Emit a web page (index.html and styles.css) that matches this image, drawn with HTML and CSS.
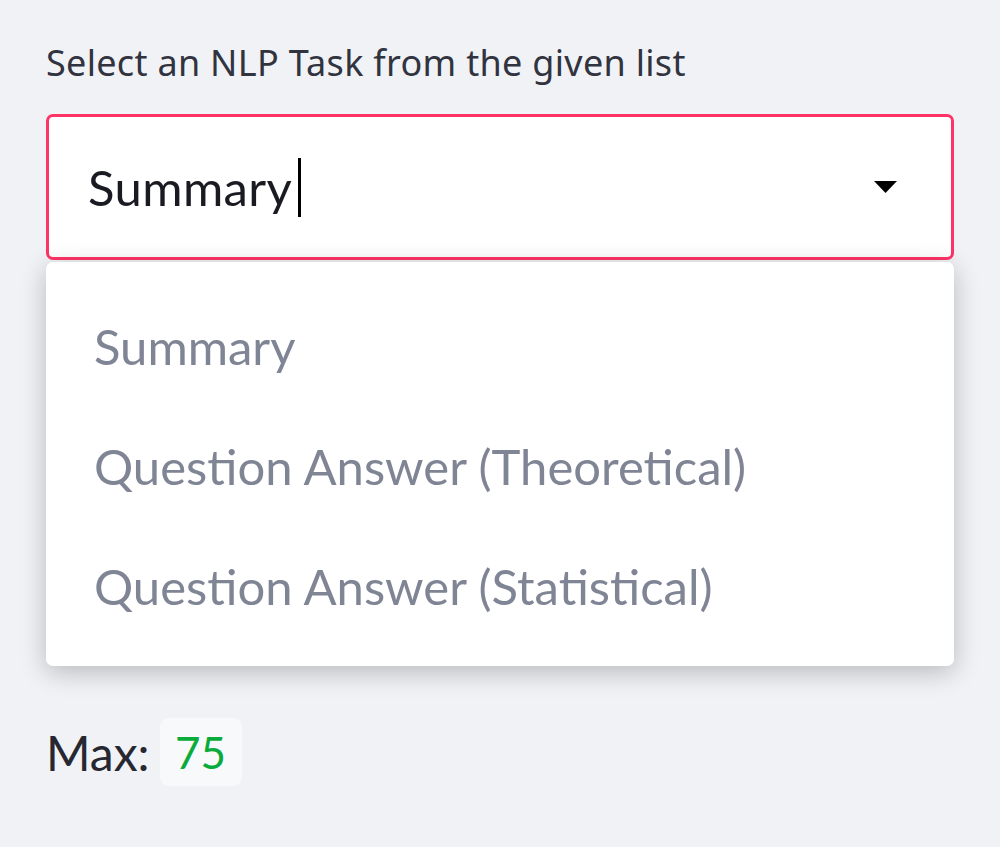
FILE: index.html
```html
<!DOCTYPE html>
<html lang="en">
<head>
<meta charset="utf-8">
<title>NLP Task</title>
<link rel="stylesheet" href="styles.css">
</head>
<body>
<div class="page">
  <div class="label">Select an NLP Task from the given list</div>
  <div class="select">
    <span class="value">Summary</span><span class="cursor"></span>
    <svg class="caret" width="23" height="12" viewBox="0 0 23 12"><path d="M0 0 H23 L11.5 12 Z" fill="#000"/></svg>
  </div>
  <ul class="menu">
    <li class="item">Summary</li>
    <li class="item">Question Answer (Theoretical)</li>
    <li class="item">Question Answer (Statistical)</li>
  </ul>
  <div class="max">
    <span class="max-label">Max:</span>
    <span class="badge">75</span>
  </div>
</div>
</body>
</html>
```

FILE: styles.css
```css
html, body {
  margin: 0;
  padding: 0;
  background: #f0f2f6;
}
body {
  font-family: Lato, "Noto Sans", sans-serif;
  color: #262730;
}
.page {
  width: 908px;
  padding: 37px 0 0 46px;
}
.label {
  font-family: "Noto Sans", Lato, sans-serif;
  font-size: 36px;
  line-height: 52px;
  height: 52px;
  margin-bottom: 25px;
  color: #31333f;
  letter-spacing: 0.3px;
}
.select {
  box-sizing: border-box;
  height: 146px;
  border: 3px solid #ff3366;
  border-radius: 7px;
  background: #ffffff;
  display: flex;
  align-items: center;
  padding: 0 54px 0 39px;
}
.value {
  font-size: 49px;
  color: #1a1b22;
  letter-spacing: 0.4px;
}
.cursor {
  display: inline-block;
  width: 3px;
  height: 59px;
  background: #000;
  margin-left: 6px;
}
.caret {
  margin-left: auto;
}
.menu {
  position: relative;
  z-index: 2;
  list-style: none;
  margin: 2px 0 0 0;
  padding: 24px 0 20px 0;
  background: #ffffff;
  border-radius: 7px;
  box-shadow: 0 6px 26px rgba(0, 0, 0, 0.24);
}
.item {
  height: 120px;
  display: flex;
  align-items: center;
  padding-left: 48px;
  font-size: 49px;
  color: #808595;
}
.max {
  display: flex;
  align-items: center;
  margin-top: 52px;
  gap: 10px;
}
.max-label {
  font-size: 48px;
  color: #262730;
}
.badge {
  display: inline-flex;
  align-items: center;
  justify-content: center;
  width: 82px;
  height: 68px;
  background: #f8f9fa;
  border-radius: 9px;
  color: #09ab3b;
  font-size: 44px;
}
```
